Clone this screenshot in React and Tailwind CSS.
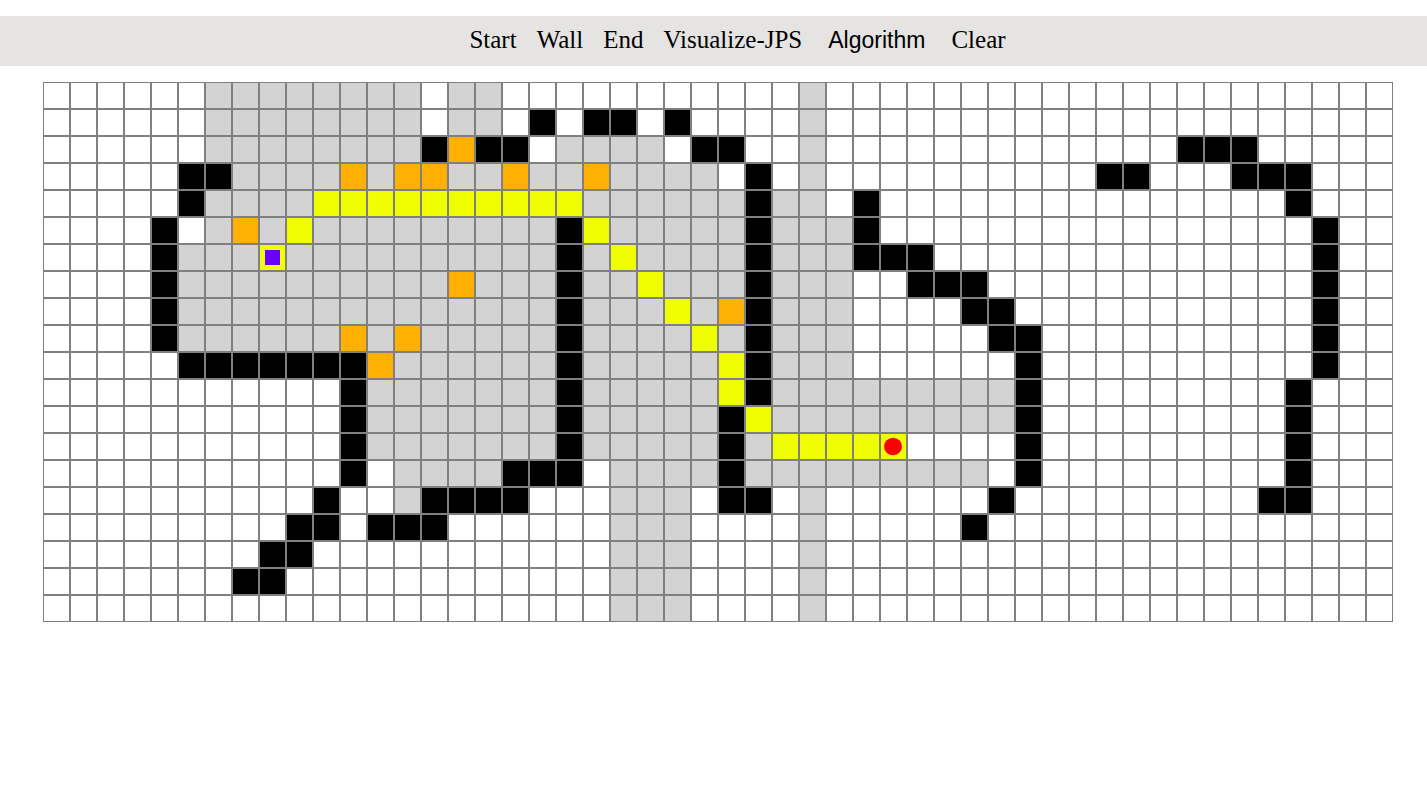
import React from "react";

const COLUMNS = 50;

// Each row lists its non-empty runs as <kind><from>-<to>:
// v visited, w wall, j jump point, p path, s start, e end.
const ROWS = [
  "v6-13 v15-16 v28",
  "v6-13 v15-16 w18 w20-21 w23 v28",
  "v6-13 w14 j15 w16-17 v19-22 w24-25 v28 w42-44",
  "w5-6 v7-10 j11 v12 j13-14 v15-16 j17 v18-19 j20 v21-24 w26 v28 w39-40 w44-46",
  "w5 v6-9 p10-19 v20-25 w26 v27-28 w30 w46",
  "w4 v6 j7 v8 p9 v10-18 w19 p20 v21-25 w26 v27-29 w30 w47",
  "w4 v5-7 s8 v9-18 w19 v20 p21 v22-25 w26 v27-29 w30-32 w47",
  "w4 v5-14 j15 v16-18 w19 v20-21 p22 v23-25 w26 v27-29 w32-34 w47",
  "w4 v5-18 w19 v20-22 p23 v24 j25 w26 v27-29 w34-35 w47",
  "w4 v5-10 j11 v12 j13 v14-18 w19 v20-23 p24 v25 w26 v27-29 w35-36 w47",
  "w5-11 j12 v13-18 w19 v20-24 p25 w26 v27-29 w36 w47",
  "w11 v12-18 w19 v20-24 p25 w26 v27-35 w36 w46",
  "w11 v12-18 w19 v20-24 w25 p26 v27-35 w36 w46",
  "w11 v12-18 w19 v20-24 w25 v26 p27-30 e31 w36 w46",
  "w11 v13-16 w17-19 v21-24 w25 v26-34 w36 w46",
  "w10 v13 w14-17 v21-23 w25-26 v28 w35 w45-46",
  "w9-10 w12-14 v21-23 v28 w34",
  "w8-9 v21-23 v28",
  "w7-8 v21-23 v28",
  "v21-23 v28",
];

const FILL = {
  v: "bg-[#d3d3d3]",
  w: "bg-black",
  j: "bg-[#ffb000]",
  p: "bg-[#f0ff00]",
  s: "bg-[#f0ff00]",
  e: "bg-[#f0ff00]",
};

function parseRow(row) {
  const cells = Array(COLUMNS).fill("");
  for (const run of row.split(" ")) {
    const [from, to = from] = run.slice(1).split("-").map(Number);
    cells.fill(run[0], from, to + 1);
  }
  return cells;
}

function Cell({ kind }) {
  return (
    <div
      className={`flex size-[27px] items-center justify-center border border-[#808080] ${FILL[kind] || "bg-white"}`}
    >
      {kind === "s" && <div className="size-[15px] bg-[#6a00ff]" />}
      {kind === "e" && (
        <svg viewBox="0 0 25 25" className="size-[25px] shrink-0" aria-label="End">
          <ellipse cx="12" cy="12.5" rx="9" ry="8.7" fill="#ff0000" />
        </svg>
      )}
    </div>
  );
}

function NavButton({ children }) {
  return (
    <button type="button" className="cursor-pointer px-[10px]">
      {children}
    </button>
  );
}

export default function App() {
  return (
    <div className="bg-white py-4 text-black">
      <nav className="flex h-[50px] items-center justify-center bg-[#e5e4e2] pb-[2px] pl-12 font-['Liberation_Serif',serif] text-[25px] leading-7">
        <NavButton>Start</NavButton>
        <NavButton>Wall</NavButton>
        <NavButton>End</NavButton>
        <NavButton>Visualize-JPS</NavButton>
        <button
          type="button"
          className="cursor-pointer px-4 font-['Liberation_Sans',sans-serif] text-[23px]"
        >
          Algorithm
        </button>
        <NavButton>Clear</NavButton>
      </nav>
      <main className="flex justify-center pt-4 pl-[9px]">
        <div>
          {ROWS.map((row, y) => (
            <div key={y} className="flex">
              {parseRow(row).map((kind, x) => (
                <Cell key={x} kind={kind} />
              ))}
            </div>
          ))}
        </div>
      </main>
    </div>
  );
}
